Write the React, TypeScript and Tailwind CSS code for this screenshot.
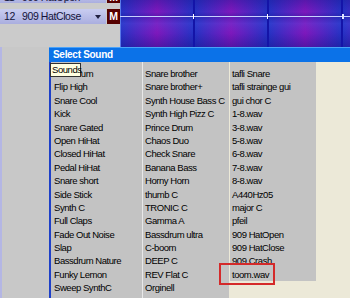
import React from 'react'

const col1 = ['Bassdrum', 'Flip High', 'Snare Cool', 'Kick', 'Snare Gated', 'Open HiHat', 'Closed HiHat', 'Pedal HiHat', 'Snare short', 'Side Stick', 'Synth C', 'Full Claps', 'Fade Out Noise', 'Slap', 'Bassdrum Nature', 'Funky Lemon', 'Sweep SynthC']
const col2 = ['Snare brother', 'Snare brother+', 'Synth House Bass C', 'Synth High Pizz C', 'Prince Drum', 'Chaos Duo', 'Check Snare', 'Banana Bass', 'Horny Horn', 'thumb C', 'TRONIC C', 'Gamma A', 'Bassdrum ultra', 'C-boom', 'DEEP C', 'REV Flat C', 'Orginell']
const col3 = ['tafli Snare', 'tafli strainge gui', 'gui chor C', '1-8.wav', '3-8.wav', '5-8.wav', '6-8.wav', '7-8.wav', '8-8.wav', 'A440Hz05', 'major C', 'pfeil', '909 HatOpen', '909 HatClose', '909 Crash', 'toom.wav']

// one channel row on the left: number, name, drop arrow and mute button
function ChannelRow({ num, name, cut }: { num: number; name: string; cut?: boolean }) {
  return (
    <div className={`flex h-[15px] gap-[1px] ${cut ? 'pb-[5px]' : ''}`}>
      <div className="flex w-[106px] items-center bg-gradient-to-b from-[#c9cdf1] to-[#aaaedf] pl-[4px] text-[10.5px] tracking-[-0.4px] text-[#14143a]">
        <span className="w-[18px]">{num}</span>
        <span className="flex-1">{name}</span>
        <span className="mr-[5px] h-0 w-0 border-x-[3.5px] border-t-[4px] border-x-transparent border-t-[#202040]" />
      </div>
      <div className="flex w-[13px] items-center justify-center bg-[#560000] text-[10.5px] font-bold text-white">M</div>
    </div>
  )
}

function PatternCell() {
  return (
    <div className="relative h-full w-[72px] bg-[linear-gradient(to_right,#2632c4,#6420c0_35%,#7e18bc_50%,#6420c0_65%,#2632c4)]">
      <div className="absolute inset-0 bg-[linear-gradient(to_bottom,rgba(20,20,140,0.35),rgba(0,0,0,0)_25%,rgba(20,20,140,0.25)_34%,rgba(90,120,255,0.15)_50%,rgba(0,0,0,0)_70%,rgba(10,10,120,0.35))]" />
    </div>
  )
}

function SoundColumn({ items, className }: { items: string[]; className: string }) {
  return (
    <div className={`bg-[#c3c3c3] pt-[5px] ${className}`}>
      {items.map(s => (
        <div key={s} className="h-[13.4px] whitespace-nowrap leading-[13.4px]">{s}</div>
      ))}
    </div>
  )
}

export default function App() {
  return (
    <div className="relative h-[298px] w-[350px] overflow-hidden bg-[#c8c8c8] font-['Liberation_Sans',Arial,sans-serif] text-[9.5px] tracking-[-0.45px] text-black">
      {/* top: channel list + pattern grid */}
      <div className="flex h-[47px]">
        <div className="flex w-[121px] flex-col gap-[1px] bg-[#cbcbcb]">
          <div className="-mt-[7px]">
            <ChannelRow num={11} name="909 HatOpen" cut />
          </div>
          <ChannelRow num={12} name="909 HatClose" />
        </div>
        <div className="w-[2px] bg-[#2ee02e]" />
        <div className="relative flex h-full flex-1 bg-[#1818b0]">
          <div className="w-[1px] bg-[#5a78e8]" />
          <PatternCell />
          <div className="w-[2px] bg-[#1414a8]" />
          <PatternCell />
          <div className="w-[2px] bg-[#1414a8]" />
          <PatternCell />
          <div className="w-[2px] bg-[#1414a8]" />
          <PatternCell />
          <div className="absolute left-0 right-0 top-[16px] h-[1px] bg-[#c8d0ff]" />
          <div className="absolute left-[73px] top-[14px] h-[5px] w-[1px] bg-white" />
          <div className="absolute left-[147px] top-[14px] h-[5px] w-[1px] bg-white" />
          <div className="absolute left-[222px] top-[14px] h-[5px] w-[2px] bg-[#e0e6ff]" />
        </div>
      </div>

      {/* sound menu */}
      <div className="flex h-[251px]">
        <div className="w-[49px] border-l-[2px] border-[#b4b6e4]" />
        <div className="flex flex-1 flex-col">
          <div className="h-[15px] border-t border-[#4aa2f8] bg-[#0b72e8] pl-[4px] text-[10px] leading-[14px] font-bold tracking-[-0.3px] text-white">
            Select Sound
          </div>
          <div className="flex flex-1 bg-[#ece9d8]">
            <SoundColumn items={col1} className="w-[93px] border-l-[2px] border-[#1e40c8] pl-[3px]" />
            <div className="w-[1px] bg-[#e8e8e8]" />
            <SoundColumn items={col2} className="w-[86px] pl-[2px]" />
            <div className="w-[1px] self-start bg-[#e8e8e8]" />
            <SoundColumn items={col3} className="w-[86px] self-start pl-[2px]" />
          </div>
        </div>
      </div>

      {/* tooltip */}
      <div className="absolute left-[50px] top-[63px] h-[14px] w-[31px] border border-[#303030] bg-[#ffffe1] pl-[1px] leading-[12px]">
        Sounds
      </div>
      {/* red highlight */}
      <div className="absolute left-[219px] top-[263px] h-[22px] w-[56px] border-2 border-[#d42a2a]" />
    </div>
  )
}
